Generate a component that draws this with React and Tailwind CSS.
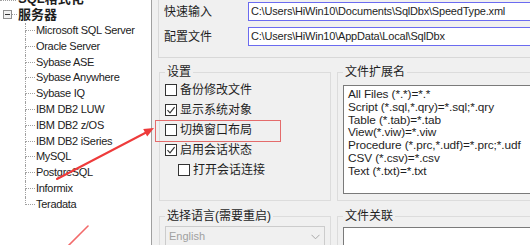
import React from "react";

const items = [
  "Microsoft SQL Server",
  "Oracle Server",
  "Sybase ASE",
  "Sybase Anywhere",
  "Sybase IQ",
  "IBM DB2 LUW",
  "IBM DB2 z/OS",
  "IBM DB2 iSeries",
  "MySQL",
  "PostgreSQL",
  "Informix",
  "Teradata",
];

const exts = [
  "All Files (*.*)=*.*",
  "Script (*.sql,*.qry)=*.sql;*.qry",
  "Table (*.tab)=*.tab",
  "View(*.viw)=*.viw",
  "Procedure (*.prc,*.udf)=*.prc;*.udf",
  "CSV (*.csv)=*.csv",
  "Text (*.txt)=*.txt",
];

function Box({ checked }) {
  return (
    <span className="w-[12px] h-[12px] border border-[#333333] bg-white flex items-center justify-center shrink-0">
      {checked && (
        <svg width="10" height="10" viewBox="0 0 10 10">
          <path d="M1.5 5.2 L4 7.8 L8.6 2.2" fill="none" stroke="#333333" strokeWidth="1.2" />
        </svg>
      )}
    </span>
  );
}

function Check({ label, checked, indent }) {
  return (
    <div className={indent ? "h-[20px] flex items-center pl-[13px]" : "h-[20px] flex items-center"}>
      <Box checked={checked} />
      <span className="ml-[3px] text-[12px] leading-none text-[#1e1e1e]">{label}</span>
    </div>
  );
}

export default function App() {
  return (
    <div className="relative w-[530px] h-[245px] overflow-hidden flex bg-[#f0f0f0] font-['Liberation_Sans','Noto_Sans_CJK_SC',sans-serif] text-[#1e1e1e]">
      {/* left tree */}
      <div className="w-[152px] shrink-0 bg-white border-r border-[#a0a0a0]">
        <div className="mt-[-10px]">
          <div className="h-[16px] flex items-center">
            <div className="w-[16px] h-full flex flex-col">
              <div className="h-[11px] border-b border-dotted border-[#a0a0a0]" />
            </div>
            <span className="ml-[2px] font-bold text-[13px] leading-none">SQL格式化</span>
          </div>
          <div className="h-[17px] flex items-center">
            <div className="ml-[3px] w-[9px] h-[9px] border border-[#8f8f8f] bg-[#f2f2f2] flex items-center justify-center">
              <span className="w-[5px] h-px bg-[#333333]" />
            </div>
            <span className="w-[5px] border-t border-dotted border-[#a0a0a0]" />
            <span className="ml-[1px] font-bold text-[13px] leading-none">服务器</span>
          </div>
          <div className="pl-[25px]">
            {items.map((t, i) => (
              <div key={t} className="h-[15.8px] flex items-stretch">
                <div className="w-[10px] flex flex-col shrink-0">
                  <div className="h-[8px] border-l border-b border-dotted border-[#a0a0a0]" />
                  <div className={i < items.length - 1 ? "flex-1 border-l border-dotted border-[#a0a0a0]" : "flex-1"} />
                </div>
                <span className="ml-[1px] text-[11px] tracking-[-0.3px] leading-[15.8px] whitespace-nowrap text-[#222222]">{t}</span>
              </div>
            ))}
          </div>
        </div>
      </div>

      {/* right pane */}
      <div className="flex-1 flex flex-col min-w-0">
        <div className="shrink-0 ml-[6px] h-[58px] border-l border-b border-[#d8d8d8] pl-[5px] pt-[2px] flex flex-col gap-[6px]">
          <div className="flex items-center h-[19px]">
            <span className="w-[84px] shrink-0 text-[12px] leading-none">快速输入</span>
            <div className="flex-1 -mr-[6px] h-[19px] border border-[#6b6bf0] bg-white pl-[2px] flex items-center text-[11px] tracking-[-0.2px] whitespace-nowrap overflow-hidden">
              C:\Users\HiWin10\Documents\SqlDbx\SpeedType.xml
            </div>
          </div>
          <div className="flex items-center h-[19px]">
            <span className="w-[84px] shrink-0 text-[12px] leading-none">配置文件</span>
            <div className="flex-1 -mr-[6px] h-[19px] border border-[#6b6bf0] bg-white pl-[2px] flex items-center text-[11px] tracking-[-0.2px] whitespace-nowrap overflow-hidden">
              C:\Users\HiWin10\AppData\Local\SqlDbx
            </div>
          </div>
        </div>

        <div className="shrink-0 flex mt-[6px] gap-[6px] pl-[7px]">
          <fieldset className="w-[172px] shrink-0 h-[137px] border border-[#dcdcdc] px-[5px]">
            <legend className="px-[2px] text-[12px] leading-[16px]">设置</legend>
            <Check label="备份修改文件" />
            <Check label="显示系统对象" checked />
            <Check label="切换窗口布局" />
            <Check label="启用会话状态" checked />
            <Check label="打开会话连接" indent />
          </fieldset>
          <fieldset className="w-[220px] shrink-0 h-[137px] border border-[#dcdcdc] px-[5px]">
            <legend className="px-[2px] text-[12px] leading-[16px]">文件扩展名</legend>
            <div className="mt-[5px] h-[109px] border border-[#7a7a7a] bg-white pl-[4px] pt-[2px] text-[11.8px] leading-[12.8px] tracking-[-0.1px] whitespace-pre text-[#1e1e1e]">
              {exts.map((e) => (
                <div key={e}>{e}</div>
              ))}
            </div>
          </fieldset>
        </div>

        <div className="shrink-0 flex mt-[7px] gap-[6px] pl-[7px]">
          <fieldset className="w-[172px] shrink-0 h-[60px] border border-[#dcdcdc] px-[5px]">
            <legend className="px-[2px] text-[12px] leading-[16px]">选择语言(需要重启)</legend>
            <div className="mt-[2px] w-[160px] h-[21px] border border-[#cccccc] bg-[#f0f0f0] flex items-center">
              <span className="flex-1 pl-[3px] text-[11px] text-[#a0a0a0]">English</span>
              <span className="w-[18px] h-full flex items-center justify-center">
                <svg width="9" height="6" viewBox="0 0 9 6">
                  <path d="M0.5 0.8 L4.5 4.8 L8.5 0.8" fill="none" stroke="#a8a8a8" strokeWidth="1" />
                </svg>
              </span>
            </div>
          </fieldset>
          <fieldset className="w-[220px] shrink-0 h-[60px] border border-[#dcdcdc] px-[5px]">
            <legend className="px-[2px] text-[12px] leading-[16px]">文件关联</legend>
            <div className="mt-[3px] h-[30px] border border-[#7a7a7a] bg-white" />
          </fieldset>
        </div>
      </div>

      {/* annotations */}
      <div className="absolute left-[155px] top-[120px] w-[126px] h-[22px] border border-[#e46b6b] pointer-events-none" />
      <svg className="absolute left-0 top-0 pointer-events-none" width="530" height="245" viewBox="0 0 530 245">
        <line x1="57" y1="179" x2="147" y2="132" stroke="#ee3b3b" strokeWidth="2" strokeLinecap="round" />
        <polygon points="154,128 147.2,136.4 143.2,128.9" fill="#ee3b3b" />
        <line x1="68" y1="246" x2="88" y2="226" stroke="#f26a6a" strokeWidth="1.6" strokeLinecap="round" />
      </svg>
    </div>
  );
}
